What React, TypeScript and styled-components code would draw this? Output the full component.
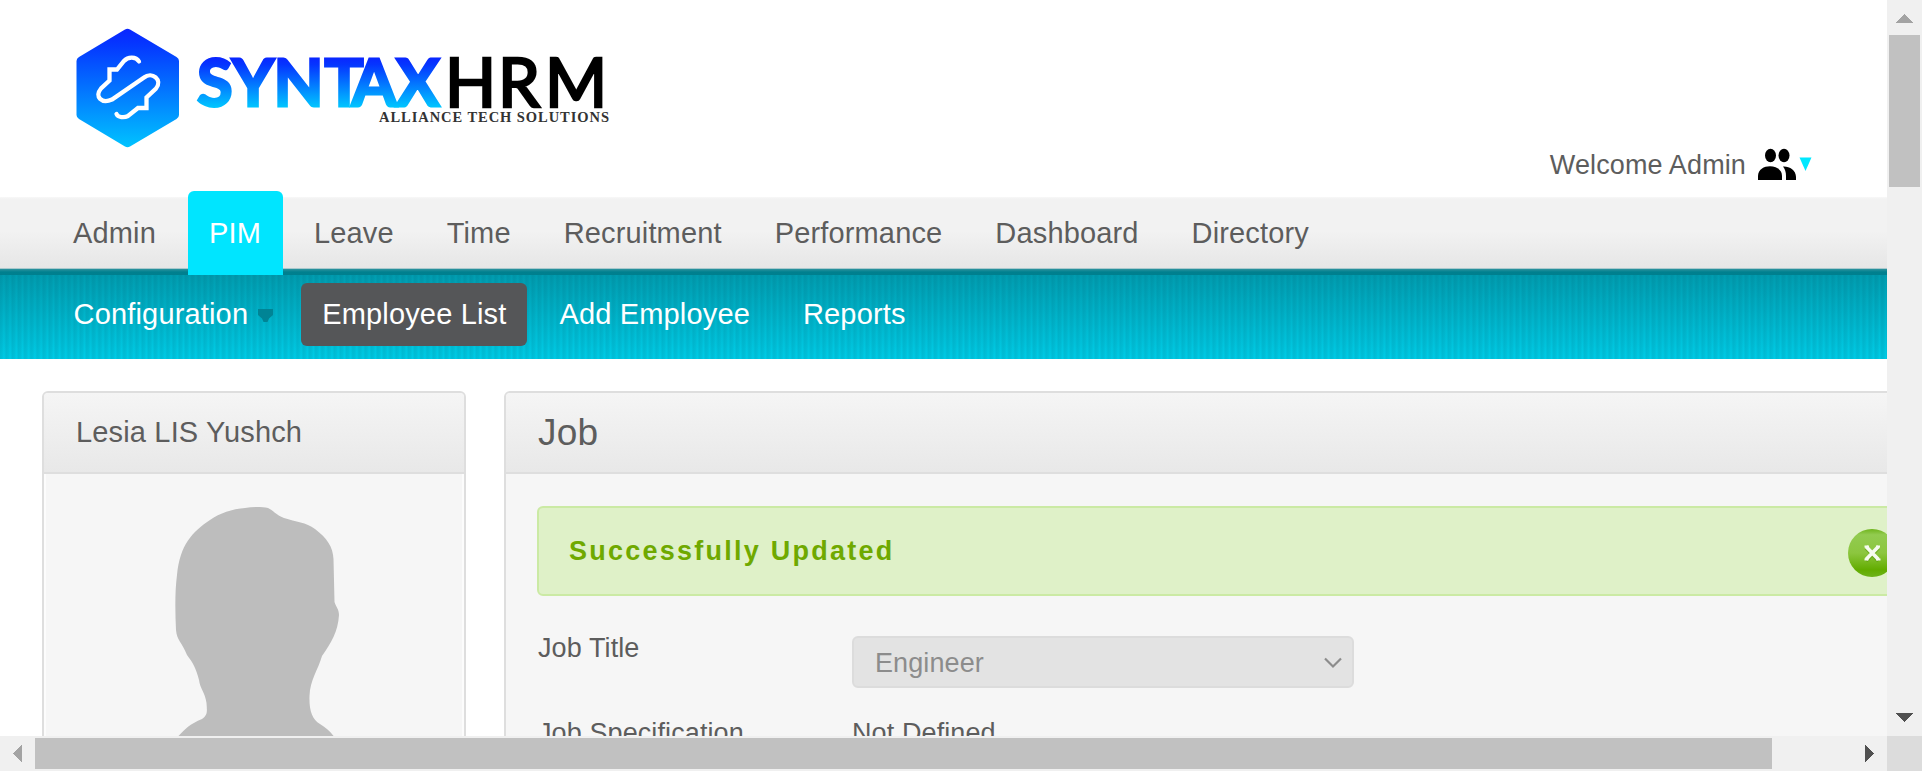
import React from "react";
import styled, { createGlobalStyle } from "styled-components";

const GlobalStyle = createGlobalStyle`
  * { box-sizing: border-box; }
  body { margin: 0; background: #fff; overflow: hidden; }
`;

const Window = styled.div`
  display: grid;
  grid-template: 736px 35px / 1887px 35px;
  width: 1922px;
  height: 771px;
  overflow: hidden;
  font-family: "Liberation Sans", Arial, sans-serif;
  color: #5d5d5d;
`;

const Viewport = styled.div`
  overflow: hidden;
  display: flex;
  flex-direction: column;
  background: #fff;
`;

const Header = styled.header`
  height: 197px;
  flex: none;
  display: flex;
  justify-content: space-between;
  padding: 24px 75px 0 70px;
`;

const Welcome = styled.div`
  display: flex;
  align-items: center;
  height: 40px;
  margin-top: 121px;
  font-size: 27px;
  white-space: nowrap;
`;

const WelcomeText = styled.span`
  margin-right: 12px;
  letter-spacing: 0.12px;
`;

const MainNav = styled.nav`
  flex: none;
  height: 78px;
  display: flex;
  align-items: flex-end;
  padding-left: 52px;
  background: linear-gradient(
    #f8f8f8 0, #f2f2f2 2px, #f2f2f2 34px, #e6e6e6 71px,
    #a9c9cd 71px, #a9c9cd 72px, #2d929d 72px, #00808f 75px, #007f8e 78px
  );
`;

const MainItem = styled.a<{ $active?: boolean }>`
  flex: none;
  height: 84px;
  line-height: 85px;
  padding: 0 ${(p) => (p.$active ? 22 : 21)}px 0 21px;
  margin-right: ${(p) => (p.$active ? 10 : 11)}px;
  border-radius: 6px 6px 0 0;
  font-size: 29px;
  letter-spacing: 0.15px;
  color: ${(p) => (p.$active ? "#fff" : "#5d5d5d")};
  background: ${(p) => (p.$active ? "#00e5ff" : "transparent")};
`;

const SubNav = styled.nav`
  flex: none;
  height: 84px;
  display: flex;
  align-items: flex-start;
  padding: 8px 0 0 52.6px;
  background:
    repeating-linear-gradient(90deg, rgba(0, 70, 90, 0.11) 0, rgba(0, 70, 90, 0.08) 2px, rgba(0, 70, 90, 0) 4px, rgba(0, 70, 90, 0.11) 6.19px),
    linear-gradient(#009db0, #00cce6);
`;

const SubItem = styled.a<{ $active?: boolean }>`
  flex: none;
  display: flex;
  align-items: center;
  height: 63px;
  padding: 0 21px;
  margin-right: 11px;
  border-radius: 6px;
  font-size: 29px;
  letter-spacing: 0.16px;
  color: #fff;
  background: ${(p) => (p.$active ? "#555658" : "transparent")};
`;

const Content = styled.main`
  display: flex;
  align-items: flex-start;
  gap: 38px;
  padding: 32px 0 0 42px;
`;

const Card = styled.section<{ $width: number }>`
  flex: none;
  width: ${(p) => p.$width}px;
  height: 620px;
  border: 2px solid #dedede;
  border-radius: 6px;
  background: #f6f6f6;
`;

const CardHead = styled.h1<{ $size: number }>`
  margin: 0;
  height: 81px;
  line-height: ${(p) => (p.$size > 30 ? 79 : 78)}px;
  padding-left: 32px;
  border-bottom: 2px solid #dedede;
  border-radius: 4px 4px 0 0;
  background: linear-gradient(#f5f5f5, #e8e8e8);
  font-size: ${(p) => p.$size}px;
  font-weight: 400;
  letter-spacing: 0.16px;
  color: #5d5d5d;
`;

const Photo = styled.div`
  display: flex;
  justify-content: center;
  height: 535px;
  border: solid #fcfcfc;
  border-width: 0 2px;
`;

const JobBody = styled.div`
  padding: 32px 31px;
`;

const Message = styled.div`
  display: flex;
  align-items: center;
  justify-content: space-between;
  height: 90px;
  width: 1390px;
  padding: 0 0 0 30px;
  border: 2px solid #cbeaa4;
  border-radius: 6px;
  background: #dff1c8;
  font-size: 27px;
  font-weight: 700;
  letter-spacing: 2.24px;
  color: #6fa900;
`;

const CloseSlot = styled.span`
  display: flex;
  margin: 3px 29px 0 0;
`;

const Field = styled.div`
  display: flex;
  padding-left: 1px;
  font-size: 27px;
  letter-spacing: 0.1px;
`;

const FieldLabel = styled.label`
  width: 314px;
  line-height: 32px;
`;

const FieldValue = styled.span`
  line-height: 32px;
`;

const JobTitle = styled(Field)`
  padding-top: 36px;
  height: 121px;
`;

const SelectBox = styled.div`
  display: flex;
  align-items: center;
  justify-content: space-between;
  width: 502px;
  height: 52px;
  margin-top: 4px;
  padding: 2px 10px 0 21px;
  border: 2px solid #dcdcdc;
  border-radius: 6px;
  background: #e3e3e3;
  color: #8c8c8c;
`;

const VerticalBar = styled.div`
  display: flex;
  flex-direction: column;
  align-items: center;
  background: #f0f0f0;
`;

const HorizontalBar = styled.div`
  display: flex;
  align-items: center;
  background: #f0f0f0;
`;

const BarButton = styled.span`
  flex: none;
  display: flex;
  width: 35px;
  height: 35px;
`;

const Thumb = styled.span<{ $w: number; $h: number }>`
  width: ${(p) => p.$w}px;
  height: ${(p) => p.$h}px;
  background: #c1c1c1;
`;

const Spacer = styled.span`
  flex: 1;
`;

const Corner = styled.div`
  background: #dcdcdc;
`;

const Arrow = ({ points, fill }: { points: string; fill: string }) => (
  <BarButton>
    <svg width="35" height="35" shapeRendering="crispEdges">
      <polygon points={points} fill={fill} />
    </svg>
  </BarButton>
);

const Logo = () => (
  <svg width="560" height="130" viewBox="70 24 560 130">
    <defs>
      <linearGradient id="hex" x1="0" y1="0" x2="0" y2="1">
        <stop offset="0" stopColor="#0a25ff" />
        <stop offset="0.12" stopColor="#0535ff" />
        <stop offset="1" stopColor="#00c3ff" />
      </linearGradient>
      <linearGradient id="word" gradientUnits="userSpaceOnUse" x1="0" y1="57" x2="0" y2="108">
        <stop offset="0" stopColor="#0a25ff" />
        <stop offset="0.15" stopColor="#0535ff" />
        <stop offset="1" stopColor="#00c8ff" />
      </linearGradient>
    </defs>
    <path
      d="M125 29.5Q127.500 28 130 29.500L176.500 57Q179 58.500 179 61V115Q179 117.500 176.500 119L130 146.500Q127.500 148 125 146.500L79 119Q76.500 117.500 76.500 115V61Q76.500 58.500 79 57Z"
      fill="url(#hex)"
    />
    <path
      d="M139 61.500C136 56.500 128 56.500 124 61L117 69.500H109.500V80.500L101 88.500C94 97 102 104 112 99.500L144 77.500C152 71 163 80 156 88.500L146.500 97.500V108H138L128 116C124 118 118 117.500 116.500 114"
      fill="none"
      stroke="#fff"
      strokeWidth="4.300"
      strokeLinecap="round"
    />
    <text x="197 232 273.5 324.5 351.5 396" y="105.5" fontFamily="Lato" fontWeight="700" fontSize="65" fill="url(#word)" stroke="url(#word)" strokeWidth="2.8">
      SYNTAX
    </text>
    <text x="445 498 545" y="106.5" fontFamily="Lato" fontWeight="400" fontSize="67" fill="#000" stroke="#000" strokeWidth="2.600">
      HRM
    </text>
    <text x="379" y="122" fontFamily="Liberation Serif" fontWeight="700" fontSize="14.5" textLength="230" lengthAdjust="spacing" fill="#333">
      ALLIANCE TECH SOLUTIONS
    </text>
  </svg>
);

const People = () => (
  <svg width="54" height="34" viewBox="0 1 54 34">
    <g fill="#000">
      <ellipse cx="12.500" cy="8.500" rx="5.500" ry="6.700" />
      <ellipse cx="26" cy="8.500" rx="5.500" ry="6.700" />
      <path d="M0 33V29C0 16 24 16 24 29V33Z" />
      <path d="M25 19.500C31 19 38 23 38 30V33H28V29C28 25 27 22 25 19.500Z" />
    </g>
    <polygon points="41.5,10.500 53.5,10.500 47.5,24" fill="#00e8ff" />
  </svg>
);

const DownMark = () => (
  <svg width="15" height="14" viewBox="0 0 15 14">
    <path d="M0 0H15V6L11 9.500L9.500 13H5.500L4 9.500L0 6Z" fill="#008495" />
  </svg>
);

const MarkSlot = styled.span`
  display: flex;
  margin: 3px -4px 0 10px;
`;

const Silhouette = () => (
  <svg width="416" height="262" viewBox="46 474 416 262">
    <path
      fill="#bdbdbd"
      d="M245 508C253 506.500 263 507 268 508C273 510 276 515 284 518C296 522 306 522 315 529C327 538 333 547 333.500 559L334.500 602C336 607 339 609 339 615C338 632 331 643 322 656C318 670 310 680 309.500 696C309 710 312 719 320 724C326 728 330 731 334 736.500H178C185 729 190 724 202 719C208 715 207 711 206.500 703C205 692 200 689 199 680C196 668 193 663 187 655C182 642 177 641 176 630C175 610 175 590 177 575C180 545 192 532 210 520C220 513 232 509 245 508Z"
    />
  </svg>
);

const CloseIcon = () => (
  <svg width="48" height="48" viewBox="0 0 48 48">
    <defs>
      <linearGradient id="close" x1="0" y1="0" x2="0" y2="1">
        <stop offset="0" stopColor="#6fb41c" />
        <stop offset="0.12" stopColor="#92cb50" />
        <stop offset="0.5" stopColor="#8cc63f" />
        <stop offset="0.85" stopColor="#62ac00" />
        <stop offset="1" stopColor="#6db31a" />
      </linearGradient>
    </defs>
    <circle cx="24" cy="24" r="24" fill="url(#close)" />
    <path d="M18 19L30.500 32M30.500 19L18 32" stroke="#4f9400" strokeOpacity="0.5" strokeWidth="3.600" />
    <path d="M18 17.500L30.500 30.500M30.500 17.500L18 30.500" stroke="#f6fbef" strokeWidth="3.600" />
    <path d="M16.500 17.500H21M28 17.500H32M16.500 30.500H20.500M28 30.500H32.500" stroke="#f6fbef" strokeWidth="1.800" />
  </svg>
);

const mainItems = ["Admin", "PIM", "Leave", "Time", "Recruitment", "Performance", "Dashboard", "Directory"];
const subItems = ["Configuration", "Employee List", "Add Employee", "Reports"];

export default function App() {
  return (
    <>
      <GlobalStyle />
      <Window>
        <Viewport>
          <Header>
            <Logo />
            <Welcome>
              <WelcomeText>Welcome Admin</WelcomeText>
              <People />
            </Welcome>
          </Header>
          <MainNav>
            {mainItems.map((item) => (
              <MainItem key={item} $active={item === "PIM"}>{item}</MainItem>
            ))}
          </MainNav>
          <SubNav>
            {subItems.map((item) => (
              <SubItem key={item} $active={item === "Employee List"}>
                {item}
                {item === "Configuration" && <MarkSlot><DownMark /></MarkSlot>}
              </SubItem>
            ))}
          </SubNav>
          <Content>
            <Card $width={424}>
              <CardHead $size={29}>Lesia LIS Yushch</CardHead>
              <Photo><Silhouette /></Photo>
            </Card>
            <Card $width={1500}>
              <CardHead $size={37}>Job</CardHead>
              <JobBody>
                <Message>
                  <span>Successfully Updated</span>
                  <CloseSlot><CloseIcon /></CloseSlot>
                </Message>
                <JobTitle>
                  <FieldLabel>Job Title</FieldLabel>
                  <SelectBox>
                    Engineer
                    <svg width="18" height="12" viewBox="0 0 18 12">
                      <path d="M1 1.500L9 9.500L17 1.500" fill="none" stroke="#8c8c8c" strokeWidth="2.200" />
                    </svg>
                  </SelectBox>
                </JobTitle>
                <Field>
                  <FieldLabel>Job Specification</FieldLabel>
                  <FieldValue>Not Defined</FieldValue>
                </Field>
              </JobBody>
            </Card>
          </Content>
        </Viewport>
        <VerticalBar>
          <Arrow points="9,23 26,23 17.5,14" fill="#a3a3a3" />
          <Thumb $w={31} $h={152} />
          <Spacer />
          <Arrow points="9,12 26,12 17.5,21" fill="#505050" />
        </VerticalBar>
        <HorizontalBar>
          <Arrow points="22,9 22,26 13,17.5" fill="#a3a3a3" />
          <Thumb $w={1737} $h={31} />
          <Spacer />
          <Arrow points="13,9 13,26 22,17.5" fill="#505050" />
        </HorizontalBar>
        <Corner />
      </Window>
    </>
  );
}
